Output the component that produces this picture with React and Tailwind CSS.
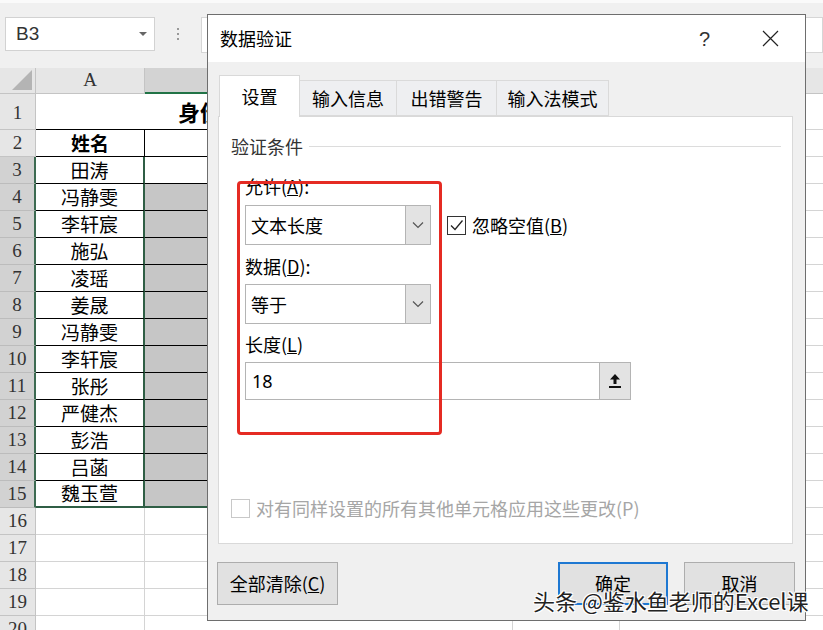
import React from 'react'

const names = ['田涛', '冯静雯', '李轩宸', '施弘', '凌瑶', '姜晟', '冯静雯', '李轩宸', '张彤', '严健杰', '彭浩', '吕菡', '魏玉萱']

const cjk = { fontFamily: '"Noto Sans CJK SC", "Noto Sans", sans-serif' }
const serif = { fontFamily: '"Liberation Serif", "Noto Sans CJK SC", serif' }

function Chevron() {
  return (
    <svg width="14" height="14" viewBox="0 0 14 14" fill="none">
      <path d="M2 4.5 L7 9.5 L12 4.5" stroke="#555" strokeWidth="1.2" />
    </svg>
  )
}

function Combo({ value }) {
  return (
    <div className="flex w-[186px] h-[40px] border border-[#b4b4b4] bg-white">
      <div className="flex-1 flex items-center pl-[5px] text-[18px] text-black">{value}</div>
      <div className="w-[25px] bg-[#e3e3e3] border-l border-[#b4b4b4] flex items-center justify-center">
        <Chevron />
      </div>
    </div>
  )
}

function Sheet() {
  return (
    <div className="w-[823px]">
      {/* toolbar */}
      <div className="h-[68px] bg-[#f0f0f0] border-t-[3px] border-[#fafafa] relative">
        <div className="flex items-start pt-[14px] pl-[5px]">
          <div className="w-[150px] h-[34px] bg-white border border-[#d2d2d2] flex items-center pl-[10px] pr-[6px]">
            <span className="text-[19px] text-[#333]" style={{ fontFamily: '"Liberation Sans", sans-serif' }}>B3</span>
            <svg className="ml-auto" width="10" height="6" viewBox="0 0 10 6"><path d="M1 1 L5 5 L9 1 Z" fill="#666" /></svg>
          </div>
          <div className="w-[46px] h-[34px] flex flex-col items-center justify-center gap-[3px]">
            <div className="w-[2px] h-[2px] bg-[#999]" />
            <div className="w-[2px] h-[2px] bg-[#999]" />
            <div className="w-[2px] h-[2px] bg-[#999]" />
          </div>
          <div className="flex-1 h-[36px] bg-white border border-[#d6d6d6]" />
        </div>
      </div>
      {/* column header */}
      <div className="flex h-[26px]">
        <div className="w-[36px] bg-[#e6e6e6] border-r border-b border-[#c4c4c4] relative">
          <svg className="absolute right-[3px] bottom-[3px]" width="20" height="20" viewBox="0 0 20 20"><path d="M20 0 L20 20 L0 20 Z" fill="#b4b4b4" /></svg>
        </div>
        <div className="w-[109px] bg-[#e6e6e6] border-r border-b border-[#c4c4c4] flex items-center justify-center text-[19px] text-[#333]" style={serif}>A</div>
        <div className="w-[368px] bg-[#d3d3d3] border-r border-[#c4c4c4] border-b-2 border-b-[#217346]" />
        <div className="w-[107px] bg-[#e6e6e6] border-r border-b border-[#c4c4c4]" />
        <div className="flex-1 bg-[#e6e6e6] border-b border-[#c4c4c4]" />
      </div>
      {/* row 1 */}
      <div className="flex h-[36px]">
        <div className="w-[36px] bg-[#e6e6e6] border-r border-b border-[#c4c4c4] flex items-end justify-center pb-[2px] text-[19px] text-[#333]" style={serif}>1</div>
        <div className="w-[109px] bg-white border-b border-black" />
        <div className="w-[368px] bg-white border-b border-black flex items-center pl-[33px] text-[22px] font-bold text-black whitespace-nowrap" style={cjk}>身份证号码信息表</div>
        <div className="w-[107px] border-r border-b border-[#d4d4d4]" />
        <div className="flex-1 border-b border-[#d4d4d4]" />
      </div>
      {/* row 2 */}
      <div className="flex h-[27px]">
        <div className="w-[36px] bg-[#e6e6e6] border-r border-b border-[#c4c4c4] flex items-center justify-center text-[19px] text-[#333]" style={serif}>2</div>
        <div className="w-[109px] bg-white border-r border-b border-black flex items-center justify-center text-[19px] font-bold text-black" style={cjk}>姓名</div>
        <div className="w-[368px] bg-white border-r border-b border-black" />
        <div className="w-[107px] border-r border-b border-[#d4d4d4]" />
        <div className="flex-1 border-b border-[#d4d4d4]" />
      </div>
      {names.map((n, i) => (
        <div key={i} className="flex h-[27px]">
          <div className="w-[36px] bg-[#d2d2d2] border-r-2 border-r-[#3d6b52] border-b border-[#bcbcbc] flex items-center justify-center text-[19px] text-[#333]" style={serif}>{i + 3}</div>
          <div className={`w-[109px] bg-white border-r-2 border-r-[#2f5e45] flex items-center justify-center text-[19px] text-black ${i === 12 ? 'border-b-2 border-b-[#2f5e45]' : 'border-b border-black'}`} style={cjk}>{n}</div>
          <div className={`w-[368px] ${i === 0 ? 'bg-white' : 'bg-[#c6c6c6]'} ${i === 12 ? 'border-b-2 border-b-[#2f5e45]' : 'border-b border-black'}`} />
          <div className="w-[107px] border-r border-b border-[#d4d4d4]" />
          <div className="flex-1 border-b border-[#d4d4d4]" />
        </div>
      ))}
      {[16, 17, 18, 19, 20].map(r => (
        <div key={r} className="flex h-[27px]">
          <div className="w-[36px] bg-[#e6e6e6] border-r border-b border-[#c4c4c4] flex items-center justify-center text-[19px] text-[#333]" style={serif}>{r}</div>
          <div className="w-[109px] border-r border-b border-[#d4d4d4]" />
          <div className="w-[368px] border-r border-b border-[#d4d4d4]" />
          <div className="w-[107px] border-r border-b border-[#d4d4d4]" />
          <div className="flex-1 border-b border-[#d4d4d4]" />
        </div>
      ))}
    </div>
  )
}

function Dialog() {
  return (
    <div className="absolute left-[207px] top-[14px] w-[599px] h-[607px] bg-[#f0f0f0] border border-[#6e6e6e] flex flex-col text-black" style={cjk}>
      {/* title bar */}
      <div className="h-[47px] bg-white flex items-center pl-[12px] pr-[26px]">
        <span className="text-[18px]">数据验证</span>
        <span className="ml-auto text-[20px] text-[#333] font-light" style={{ fontFamily: '"Liberation Sans", sans-serif' }}>?</span>
        <svg className="ml-[52px]" width="17" height="17" viewBox="0 0 17 17"><path d="M1 1 L16 16 M16 1 L1 16" stroke="#222" strokeWidth="1.2" /></svg>
      </div>
      {/* tabs */}
      <div className="flex items-end h-[54px] pl-[11px]">
        <div className="w-[81px] h-[42px] bg-white border border-b-0 border-[#d9d9d9] flex items-center justify-center text-[18px] relative z-10 -mb-px">设置</div>
        <div className="w-[97px] h-[36px] bg-[#eeeff1] border border-l-0 border-[#dadada] flex items-center justify-center text-[18px]">输入信息</div>
        <div className="w-[100px] h-[36px] bg-[#eeeff1] border border-l-0 border-[#dadada] flex items-center justify-center text-[18px]">出错警告</div>
        <div className="w-[112px] h-[36px] bg-[#eeeff1] border border-l-0 border-[#dadada] flex items-center justify-center text-[18px]">输入法模式</div>
      </div>
      {/* panel */}
      <div className="ml-[10px] w-[575px] h-[428px] bg-white border border-[#d9d9d9] relative flex flex-col">
        <div className="flex items-center pl-[12px] pr-[11px] mt-[18px] h-[22px]">
          <span className="text-[18px] text-[#333]">验证条件</span>
          <div className="flex-1 h-px bg-[#dcdcdc] ml-[6px]" />
        </div>
        <div className="pl-[26px] mt-[19px] h-[20px] flex items-center text-[18px]">允许(<u>A</u>):</div>
        <div className="flex items-center pl-[26px] mt-[9px]">
          <Combo value="文本长度" />
          <div className="ml-[16px] w-[19px] h-[19px] border border-[#333] flex items-center justify-center bg-white">
            <svg width="15" height="15" viewBox="0 0 15 15" fill="none"><path d="M2 7.5 L6 11.5 L13.5 2.5" stroke="#222" strokeWidth="1.3" /></svg>
          </div>
          <span className="ml-[6px] text-[18px]">忽略空值(<u>B</u>)</span>
        </div>
        <div className="pl-[26px] mt-[11px] h-[20px] flex items-center text-[18px]">数据(<u>D</u>):</div>
        <div className="pl-[26px] mt-[8px]">
          <Combo value="等于" />
        </div>
        <div className="pl-[26px] mt-[10px] h-[20px] flex items-center text-[18px]">长度(<u>L</u>)</div>
        <div className="pl-[26px] mt-[8px]">
          <div className="flex w-[386px] h-[38px] border border-[#b4b4b4] bg-white">
            <div className="flex-1 flex items-center pl-[6px] text-[18px]" style={{ fontFamily: '"Noto Sans", sans-serif' }}>18</div>
            <div className="w-[31px] bg-[#e3e3e3] border-l border-[#b4b4b4] flex items-center justify-center">
              <svg width="14" height="16" viewBox="0 0 14 16"><path d="M7 1 L12 6.5 L8.5 6.5 L8.5 11 L5.5 11 L5.5 6.5 L2 6.5 Z" fill="#111" /><rect x="1" y="13" width="12" height="2" fill="#111" /></svg>
            </div>
          </div>
        </div>
        <div className="mt-auto mb-[21px] pl-[12px] flex items-center">
          <div className="w-[19px] h-[19px] border border-[#c8c8c8] bg-white" />
          <span className="ml-[6px] text-[18px] text-[#a6a6a6]">对有同样设置的所有其他单元格应用这些更改(P)</span>
        </div>
        {/* red highlight */}
        <div className="absolute left-[18px] top-[64px] w-[205px] h-[254px] border-[3px] border-[#e52b23] rounded-[4px]" />
      </div>
      {/* buttons */}
      <div className="flex mt-[18px] pl-[9px]">
        <div className="w-[121px] h-[43px] bg-[#e1e1e1] border border-[#adadad] flex items-center justify-center text-[18px]">全部清除(<u>C</u>)</div>
        <div className="ml-[220px] w-[110px] h-[43px] bg-[#e1e1e1] border-2 border-[#1e78d2] flex items-center justify-center text-[18px]">确定</div>
        <div className="ml-[16px] w-[111px] h-[43px] bg-[#e1e1e1] border border-[#adadad] flex items-center justify-center text-[18px]">取消</div>
      </div>
    </div>
  )
}

export default function App() {
  return (
    <div className="w-[823px] h-[630px] relative overflow-hidden bg-white">
      <Sheet />
      <Dialog />
      <div
        className="absolute left-[533px] top-[584px] text-[22px] text-[#222] whitespace-nowrap"
        style={{ ...cjk, textShadow: '1px 1px 0 #fff, -1px -1px 0 #fff, 1px -1px 0 #fff, -1px 1px 0 #fff' }}
      >
        头条 @鉴水鱼老师的Excel课
      </div>
    </div>
  )
}
